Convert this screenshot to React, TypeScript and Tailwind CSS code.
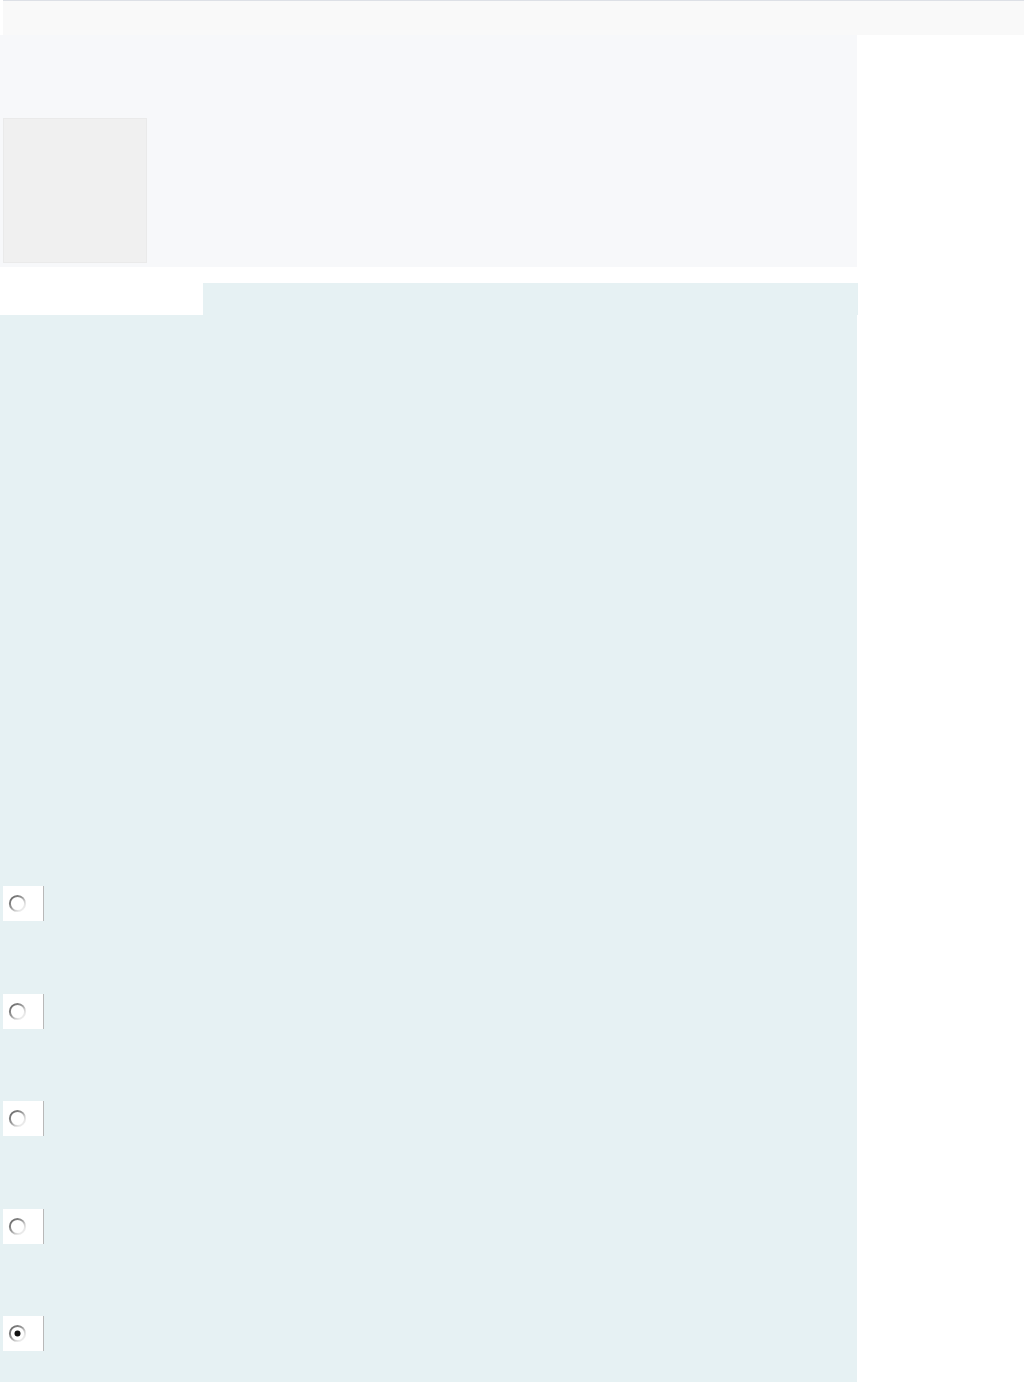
import React from 'react';

function Radio({ checked = false }: { checked?: boolean }) {
  const id = checked ? 'rg-on' : 'rg-off';
  return (
    <div className="flex h-[35px] w-[41px] items-center border-r border-[#b8b8b8] bg-white pl-[5px]">
      <svg width="19" height="19" viewBox="0 0 19 19">
        <defs>
          <linearGradient id={id} x1="0" y1="0" x2="1" y2="1">
            <stop offset="0" stopColor="#5e5e5e" />
            <stop offset="0.45" stopColor="#9a9a9a" />
            <stop offset="0.75" stopColor="#e4e4e4" />
            <stop offset="1" stopColor="#f4f4f4" />
          </linearGradient>
        </defs>
        <circle cx="9.5" cy="9.5" r="7.6" fill="#ffffff" stroke={`url(#${id})`} strokeWidth="2" />
        {checked && <circle cx="9.5" cy="9.5" r="3" fill="#111111" />}
      </svg>
    </div>
  );
}

export default function App() {
  const options = [false, false, false, false, true];

  return (
    <div className="min-h-[1382px] w-[1024px] bg-white">
      {/* top bar */}
      <div className="ml-[3px] h-[35px] border-t border-[#dde0e6] bg-[#f9f9f9]" />

      {/* header block with image placeholder */}
      <div className="h-[232px] w-[857px] bg-[#f7f8fa] pl-[3px] pt-[83px]">
        <div className="h-[145px] w-[144px] border border-[#eaeaea] bg-[#f0f0f0]" />
      </div>

      {/* tab */}
      <div className="mt-[16px] ml-[203px] h-[32px] w-[655px] bg-[#e6f1f3]" />

      {/* question panel */}
      <div className="flex h-[1067px] w-[857px] flex-col gap-[72.5px] bg-[#e6f1f3] pl-[3px] pt-[571px]">
        {options.map((c, i) => (
          <Radio key={i} checked={c} />
        ))}
      </div>
    </div>
  );
}
